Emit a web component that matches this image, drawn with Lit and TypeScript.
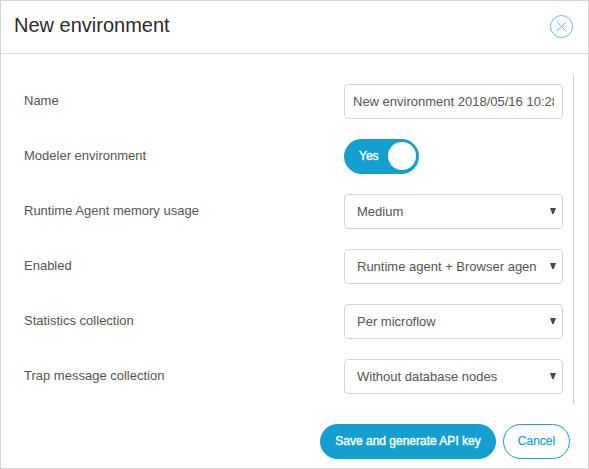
import { LitElement, html, css } from "lit";
import { customElement, property } from "lit/decorators.js";

@customElement("select-field")
class SelectField extends LitElement {
  @property() value = "";

  static styles = css`
    :host { display: block; width: 219px; }
    .box {
      box-sizing: border-box;
      display: flex;
      align-items: center;
      height: 35px;
      padding: 0 6px 0 12px;
      border: 1px solid #d4d4d4;
      border-radius: 4px;
      background: #fff;
    }
    .value {
      width: 180px;
      overflow: hidden;
      white-space: nowrap;
      line-height: 33px;
    }
    .arrow { display: block; margin: -1px 0 0 auto; padding-bottom: 1px; fill: #484848; }
  `;

  render() {
    return html`<div class="box">
      <span class="value">${this.value}</span>
      <svg class="arrow" width="6" height="6" viewBox="0 0 6 6"><path d="M0 0H6L3.7 6H2.3Z" /></svg>
    </div>`;
  }
}

@customElement("toggle-switch")
class ToggleSwitch extends LitElement {
  static styles = css`
    :host { display: block; }
    .track {
      box-sizing: border-box;
      display: flex;
      align-items: center;
      justify-content: space-between;
      width: 75px;
      height: 35px;
      padding: 0 3px 1px 15px;
      border-radius: 18px;
      background: #13a0d0;
      color: #fff;
      font-size: 12px;
      -webkit-text-stroke: 0.4px #fff;
    }
    .track span:first-child { padding-bottom: 1px; }
    .knob { width: 28px; height: 28px; border-radius: 50%; background: #fff; }
  `;

  render() {
    return html`<div class="track"><span>Yes</span><span class="knob"></span></div>`;
  }
}

@customElement("app-root")
class AppRoot extends LitElement {
  static styles = css`
    :host {
      display: block;
      font: 13px "Liberation Sans", Arial, sans-serif;
      color: #555;
    }
    .dialog {
      box-sizing: border-box;
      display: flex;
      flex-direction: column;
      width: 589px;
      height: 469px;
      border: 1px solid #d4d4d4;
      background: #fff;
    }
    .header {
      box-sizing: border-box;
      display: flex;
      align-items: center;
      justify-content: space-between;
      height: 53px;
      padding: 0 15px 1px 13px;
      border-bottom: 1px solid #d4d4d4;
    }
    .title {
      margin: 0;
      padding-bottom: 3px;
      font-size: 20px;
      font-weight: 400;
      line-height: 24px;
      color: #2a2a2a;
    }
    .close { display: block; fill: none; stroke: #63bde8; }
    .form {
      box-sizing: border-box;
      width: 573px;
      height: 330px;
      margin-top: 20px;
      padding: 10px 9px 0 23px;
      border-right: 1px solid #d4d4d4;
      display: flex;
      flex-direction: column;
      gap: 20px;
    }
    .row { display: grid; grid-template-columns: 320px 219px; height: 35px; }
    .label { padding-top: 9px; line-height: 15px; }
    .input {
      box-sizing: border-box;
      height: 35px;
      padding: 0 8px;
      border: 1px solid #d4d4d4;
      border-radius: 4px;
    }
    .text { overflow: hidden; white-space: nowrap; line-height: 33px; }
    .footer {
      display: flex;
      justify-content: flex-end;
      gap: 7px;
      padding: 20px 18px 0 0;
    }
    .button {
      box-sizing: border-box;
      height: 35px;
      padding: 0 0 1px;
      border: 1px solid #13a0d0;
      border-radius: 18px;
      background: #fff;
      color: #13a0d0;
      font: 12px "Liberation Sans", Arial, sans-serif;
      white-space: nowrap;
    }
    .save {
      width: 176px;
      background: #13a0d0;
      color: #fff;
      -webkit-text-stroke: 0.4px #fff;
    }
    .cancel { width: 67px; -webkit-text-stroke: 0.2px #13a0d0; }
  `;

  render() {
    return html`<div class="dialog">
      <div class="header">
        <h1 class="title">New environment</h1>
        <svg class="close" width="23" height="23" viewBox="0 0 23 23">
          <circle cx="11.5" cy="11.5" r="11" />
          <path d="M7 7L16 16M16 7L7 16" />
        </svg>
      </div>
      <div class="form">
        <div class="row">
          <span class="label">Name</span>
          <div class="input"><div class="text">New environment 2018/05/16 10:28</div></div>
        </div>
        <div class="row">
          <span class="label">Modeler environment</span>
          <toggle-switch></toggle-switch>
        </div>
        ${[
          ["Runtime Agent memory usage", "Medium"],
          ["Enabled", "Runtime agent + Browser agent"],
          ["Statistics collection", "Per microflow"],
          ["Trap message collection", "Without database nodes"],
        ].map(
          ([label, value]) => html`<div class="row">
            <span class="label">${label}</span>
            <select-field .value=${value}></select-field>
          </div>`
        )}
      </div>
      <div class="footer">
        <button class="button save">Save and generate API key</button>
        <button class="button cancel">Cancel</button>
      </div>
    </div>`;
  }
}
